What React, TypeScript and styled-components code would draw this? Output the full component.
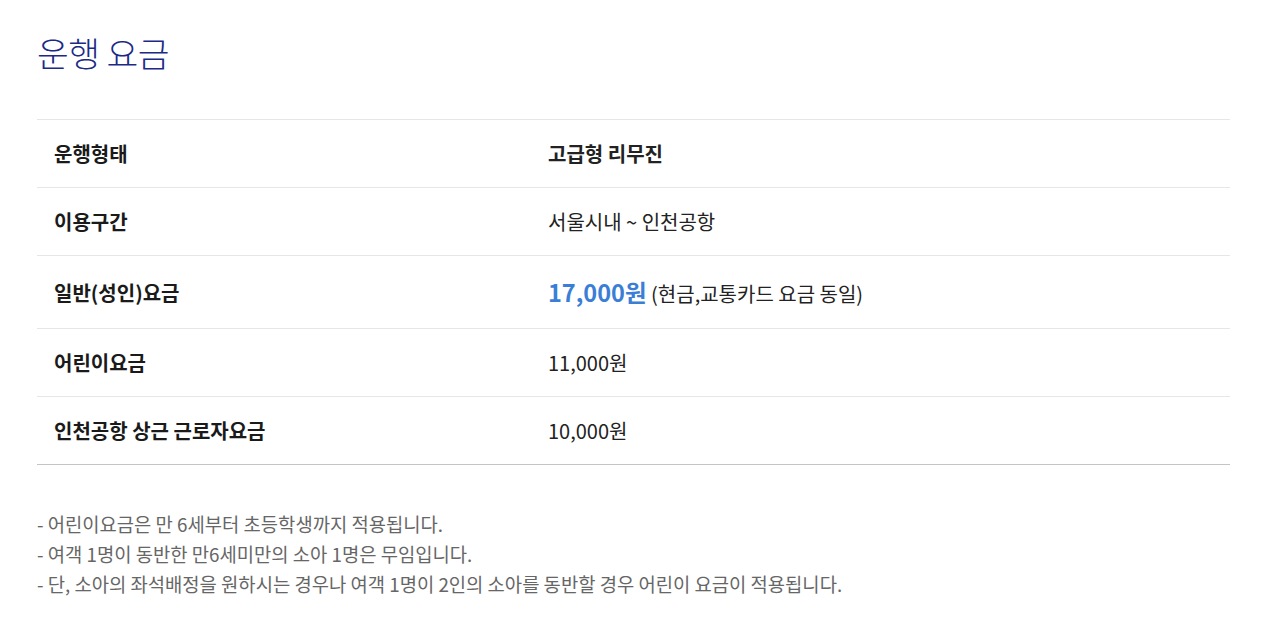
import React from "react";
import styled, { createGlobalStyle } from "styled-components";

const Global = createGlobalStyle`
  html, body { margin: 0; padding: 0; background: #fff; }
  body { font-family: "Noto Sans CJK KR", "Noto Sans", sans-serif; }
`;

const Page = styled.div`
  padding: 30px 50px 0 37px;
`;

const Title = styled.h2`
  margin: 0;
  font-size: 34.5px;
  line-height: 45px;
  font-weight: 300;
  color: #1c2a86;
  letter-spacing: -0.5px;
`;

const Table = styled.table`
  width: 1193px;
  margin-top: 44px;
  border-collapse: collapse;
  border-top: 1px solid #e6e6e6;
  border-bottom: 1px solid #c4c4c4;
`;

const Row = styled.tr<{ $tall?: boolean }>`
  height: ${(p) => (p.$tall ? 73 : 68)}px;
  & + & { border-top: 1px solid #e6e6e6; }
`;

const Label = styled.th`
  width: 494px;
  padding: 0 0 0 17px;
  text-align: left;
  font-weight: 700;
  font-size: 20px;
  color: #1a1a1a;
  vertical-align: middle;
`;

const Value = styled.td`
  padding: 0;
  font-size: 20px;
  color: #222;
  vertical-align: middle;
`;

const Price = styled.strong`
  font-size: 23.5px;
  font-weight: 700;
  color: #3b7ed6;
`;

const Notes = styled.ul`
  list-style: none;
  margin: 44px 0 0;
  padding: 0;
`;

const Note = styled.li`
  font-size: 18.8px;
  line-height: 30px;
  color: #666;
`;

export default function App() {
  return (
    <>
      <Global />
      <Page>
        <Title>운행 요금</Title>
        <Table>
          <tbody>
            <Row>
              <Label>운행형태</Label>
              <Value><b>고급형 리무진</b></Value>
            </Row>
            <Row>
              <Label>이용구간</Label>
              <Value>서울시내 ~ 인천공항</Value>
            </Row>
            <Row $tall>
              <Label>일반(성인)요금</Label>
              <Value>
                <Price>17,000원</Price> (현금,교통카드 요금 동일)
              </Value>
            </Row>
            <Row>
              <Label>어린이요금</Label>
              <Value>11,000원</Value>
            </Row>
            <Row>
              <Label>인천공항 상근 근로자요금</Label>
              <Value>10,000원</Value>
            </Row>
          </tbody>
        </Table>
        <Notes>
          <Note>- 어린이요금은 만 6세부터 초등학생까지 적용됩니다.</Note>
          <Note>- 여객 1명이 동반한 만6세미만의 소아 1명은 무임입니다.</Note>
          <Note>- 단, 소아의 좌석배정을 원하시는 경우나 여객 1명이 2인의 소아를 동반할 경우 어린이 요금이 적용됩니다.</Note>
        </Notes>
      </Page>
    </>
  );
}
